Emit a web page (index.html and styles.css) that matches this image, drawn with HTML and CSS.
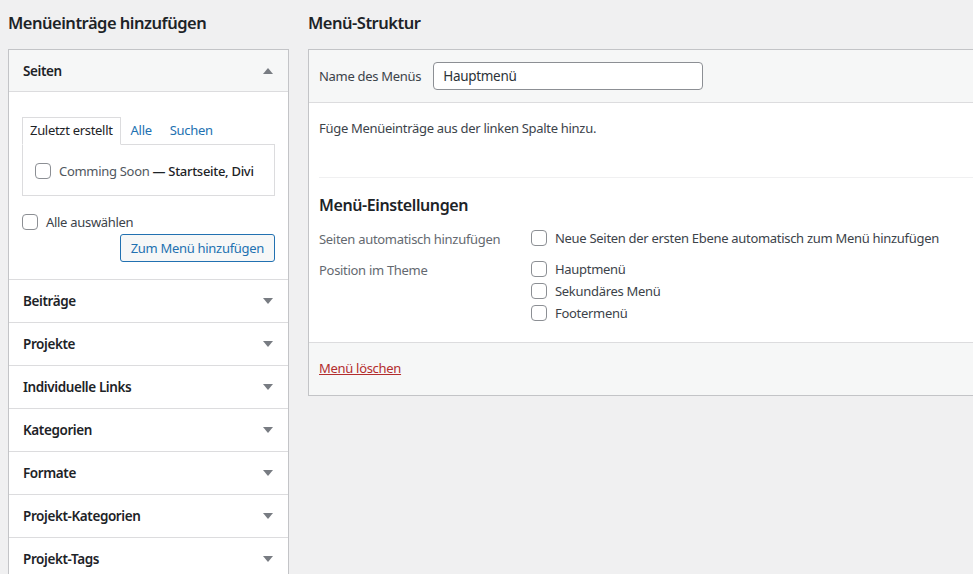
FILE: index.html
```
<!DOCTYPE html>
<html lang="de">
<head>
  <meta charset="UTF-8">
  <meta name="viewport" content="width=device-width, initial-scale=1.0">
  <title>Menüs</title>
  <link rel="stylesheet" href="styles.css">
</head>
<body>
  <div class="nav-menus">
    <!-- linke Spalte: Einträge hinzufügen -->
    <div class="menu-settings-left">
      <h2>Menüeinträge hinzufügen</h2>
      <div class="accordion">
        <div class="acc-section open">
          <div class="acc-title">Seiten <span class="arrow up"></span></div>
          <div class="acc-content">
            <ul class="tabs">
              <li class="tab active">Zuletzt erstellt</li>
              <li class="tab">Alle</li>
              <li class="tab">Suchen</li>
            </ul>
            <div class="tab-panel">
              <label class="item"><input type="checkbox"><span>Comming Soon <span class="post-state">— Startseite, Divi</span></span></label>
            </div>
            <label class="select-all"><input type="checkbox"><span>Alle auswählen</span></label>
            <div class="submit-row">
              <button class="btn-secondary">Zum Menü hinzufügen</button>
            </div>
          </div>
        </div>
        <div class="acc-section"><div class="acc-title">Beiträge <span class="arrow"></span></div></div>
        <div class="acc-section"><div class="acc-title">Projekte <span class="arrow"></span></div></div>
        <div class="acc-section"><div class="acc-title">Individuelle Links <span class="arrow"></span></div></div>
        <div class="acc-section"><div class="acc-title">Kategorien <span class="arrow"></span></div></div>
        <div class="acc-section"><div class="acc-title">Formate <span class="arrow"></span></div></div>
        <div class="acc-section"><div class="acc-title">Projekt-Kategorien <span class="arrow"></span></div></div>
        <div class="acc-section"><div class="acc-title">Projekt-Tags <span class="arrow"></span></div></div>
      </div>
    </div>

    <!-- rechte Spalte: Menü-Struktur -->
    <div class="menu-management">
      <h2>Menü-Struktur</h2>
      <div class="menu-edit">
        <div class="menu-header">
          <label for="menu-name">Name des Menüs</label>
          <input id="menu-name" type="text" value="Hauptmenü">
        </div>
        <div class="menu-body">
          <p class="drag-hint">Füge Menüeinträge aus der linken Spalte hinzu.</p>
          <div class="menu-settings">
            <h3>Menü-Einstellungen</h3>
            <div class="setting-row">
              <div class="setting-label">Seiten automatisch hinzufügen</div>
              <div class="setting-input">
                <label><input type="checkbox"><span>Neue Seiten der ersten Ebene automatisch zum Menü hinzufügen</span></label>
              </div>
            </div>
            <div class="setting-row">
              <div class="setting-label">Position im Theme</div>
              <div class="setting-input">
                <label><input type="checkbox"><span>Hauptmenü</span></label>
                <label><input type="checkbox"><span>Sekundäres Menü</span></label>
                <label><input type="checkbox"><span>Footermenü</span></label>
              </div>
            </div>
          </div>
        </div>
        <div class="menu-footer">
          <a href="#" class="delete-link">Menü löschen</a>
        </div>
      </div>
    </div>
  </div>
</body>
</html>
```

FILE: styles.css
```
*{
  box-sizing: border-box;
}
body{
  margin: 0;
  background: #f0f0f1;
  color: #3c434a;
  font-family: "Noto Sans", "Liberation Sans", sans-serif;
  font-size: 13px;
  letter-spacing: -0.3px;
  overflow: hidden;
}
.nav-menus{
  display: flex;
  gap: 19px;
  padding: 12px 0 0 8px;
}
h2{
  margin: 0 0 15px;
  font-size: 16.5px;
  line-height: 22px;
  font-weight: 600;
  letter-spacing: -0.5px;
  color: #1d2327;
}

/* linke Spalte */
.menu-settings-left{
  width: 281px;
  flex-shrink: 0;
}
.accordion{
  border: 1px solid #c3c4c7;
  background: #fff;
}
.acc-section{
  border-bottom: 1px solid #dcdcde;
}
.acc-title{
  height: 42px;
  display: flex;
  align-items: center;
  justify-content: space-between;
  padding: 0 15px 0 14px;
  font-size: 13.5px;
  font-weight: 600;
  letter-spacing: -0.4px;
  color: #1d2327;
}
.open .acc-title{
  background: #f6f7f7;
  border-bottom: 1px solid #dcdcde;
}
.arrow{
  width: 0;
  height: 0;
  border-left: 5px solid transparent;
  border-right: 5px solid transparent;
  border-top: 6px solid #787c82;
}
.arrow.up{
  border-top: none;
  border-bottom: 6px solid #787c82;
}
.acc-content{
  padding: 25px 13px 17px;
}
.tabs{
  list-style: none;
  margin: 0;
  padding: 0;
  display: flex;
  position: relative;
  z-index: 1;
}
.tab{
  padding: 3px 7px 4px;
  color: #2271b1;
  border: 1px solid transparent;
  margin-right: 2px;
}
.tab.active{
  color: #1d2327;
  border-color: #dcdcde;
  border-bottom-color: #fff;
  background: #fff;
  margin-bottom: -1px;
}
.tab-panel{
  border: 1px solid #dcdcde;
  padding: 17px 12px 15px;
}
label{
  display: flex;
  align-items: center;
  gap: 8px;
  line-height: 18px;
}
input[type="checkbox"]{
  appearance: none;
  width: 16px;
  height: 16px;
  margin: 0;
  border: 1px solid #8c8f94;
  border-radius: 4px;
  background: #fff;
  flex-shrink: 0;
}
.item{
  color: #50575e;
}
.post-state{
  color: #1d2327;
  font-weight: 500;
}
.select-all{
  margin-top: 17px;
}
.submit-row{
  display: flex;
  justify-content: flex-end;
  margin-top: 3px;
}
.btn-secondary{
  font: inherit;
  letter-spacing: -0.3px;
  height: 28px;
  padding: 0 10px;
  color: #2271b1;
  background: #f6f7f7;
  border: 1px solid #2271b1;
  border-radius: 3px;
}

/* rechte Spalte */
.menu-management{
  width: 700px;
  flex-shrink: 0;
}
.menu-edit{
  border: 1px solid #c3c4c7;
  background: #fff;
}
.menu-header{
  display: flex;
  align-items: center;
  gap: 12px;
  padding: 12px 10px;
  background: #f6f7f7;
  border-bottom: 1px solid #dcdcde;
}
.menu-header input{
  width: 270px;
  height: 28px;
  padding: 0 9px;
  font: inherit;
  font-size: 13.5px;
  letter-spacing: -0.3px;
  color: #2c3338;
  border: 1px solid #8c8f94;
  border-radius: 4px;
}
.menu-body{
  padding: 0 10px;
}
.drag-hint{
  margin: 0;
  padding: 16px 0 39px;
  line-height: 19px;
  border-bottom: 1px solid #f0f0f1;
}
.menu-settings{
  padding: 16px 0 21px;
}
h3{
  margin: 0 0 14px;
  font-size: 16px;
  line-height: 22px;
  font-weight: 600;
  letter-spacing: -0.4px;
  color: #1d2327;
}
.setting-row{
  display: flex;
  margin-bottom: 13px;
}
.setting-row:last-child{
  margin-bottom: 0;
}
.setting-label{
  width: 212px;
  color: #646970;
  line-height: 18px;
}
.setting-input{
  display: flex;
  flex-direction: column;
  gap: 6px;
}
.setting-input label{
  height: 16px;
}
.menu-footer{
  background: #f6f7f7;
  border-top: 1px solid #dcdcde;
  padding: 16px 10px 17px;
  line-height: 19px;
}
.delete-link{
  color: #b32d2e;
}
```
